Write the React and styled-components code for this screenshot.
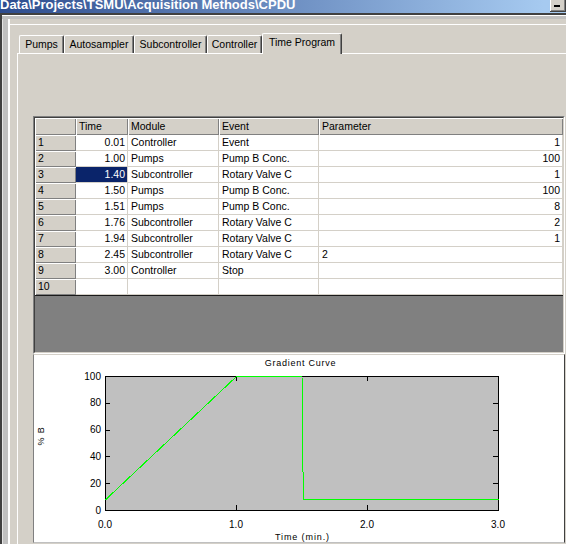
import React from 'react';
import styled, { createGlobalStyle } from 'styled-components';

const UI_FONT = `"Liberation Sans", Arial, sans-serif`;

const GlobalStyle = createGlobalStyle`
  html, body {
    margin: 0;
    padding: 0;
  }
  body {
    width: 566px;
    height: 544px;
    overflow: hidden;
    background: #d4d0c8;
    font-family: ${UI_FONT};
    font-size: 10.5px;
    color: #000;
  }
`;

const StyledWindow = styled.div`
  display: flex;
  flex-direction: column;
  width: 566px;
  height: 544px;
  overflow: hidden;
`;

const StyledTitleBar = styled.div`
  display: flex;
  justify-content: space-between;
  align-items: flex-start;
  height: 13px;
  background: linear-gradient(to right, #2d4c8e 0%, #a6caf0 96%);
`;

const StyledTitleText = styled.span`
  color: #fff;
  font-weight: bold;
  font-size: 13px;
  line-height: 12px;
  margin-top: -1px;
  white-space: nowrap;
`;

const StyledMinButton = styled.div`
  position: relative;
  width: 16px;
  height: 14px;
  margin-top: -2px;
  background: #d4d0c8;
  box-shadow: inset -1px -1px #404040, inset 1px 1px #fff, inset -2px -2px #808080;
  &::after {
    content: '';
    position: absolute;
    left: 4px;
    bottom: 5px;
    width: 6px;
    height: 2px;
    background: #000;
  }
`;

const StyledFrame = styled.div`
  flex: 1;
  border-top: 2px solid #404040;
  border-left: 2px solid #404040;
  padding: 9px 0 0 8px;
  background:
    linear-gradient(to bottom, #fff 0 1px, #c0c0c0 1px 4px, transparent 4px),
    linear-gradient(to right, #e4e4e4 0 1px, #c0c0c0 1px 6px, #fff 6px 8px, transparent 8px),
    #d4d0c8;
  background-repeat: no-repeat;
`;

const StyledInner = styled.div`
  height: 100%;
  border-top: 1px solid #fff;
  padding: 8px 0 0 7px;
`;

const StyledTabRow = styled.div`
  position: relative;
  z-index: 1;
  display: flex;
  align-items: flex-end;
  height: 20px;
  padding-left: 2px;
`;

const StyledTab = styled.div`
  box-sizing: border-box;
  width: ${(p) => p.$width}px;
  height: ${(p) => (p.$active ? 21 : 18)}px;
  margin-bottom: ${(p) => (p.$active ? -1 : 0)}px;
  border-top: 1px solid #fff;
  border-left: 1px solid #fff;
  border-right: 1px solid #404040;
  border-radius: 2px 2px 0 0;
  box-shadow: inset -1px 0 #808080;
  background: #d4d0c8;
  text-align: center;
  line-height: 17px;
  white-space: nowrap;
`;

const StyledPanel = styled.div`
  width: 600px;
  height: 100%;
  border-top: 1px solid #fff;
  border-left: 1px solid #fff;
  padding: 62px 0 0 15px;
  background: #d4d0c8;
`;

const StyledGrid = styled.div`
  box-sizing: border-box;
  width: 532px;
  border: 1px solid;
  border-color: #808080 #fff #fff #808080;
`;

const StyledGridInner = styled.div`
  height: 234px;
  border: 1px solid;
  border-color: #404040 #d4d0c8 #d4d0c8 #404040;
  background: #808080;
`;

const StyledRows = styled.div`
  border-bottom: 1px solid #1a1a1a;
`;

const StyledRow = styled.div`
  display: grid;
  grid-template-columns: 41px 52px 91px 100px 1fr;
  height: ${(p) => (p.$header ? 17 : 16)}px;
`;

const StyledHeadCell = styled.div`
  box-sizing: border-box;
  padding: ${(p) => (p.$header ? 1 : 0)}px 0 0 3px;
  background: #d4d0c8;
  box-shadow: inset 1px 1px #fff, inset -1px -1px #808080;
  line-height: 15px;
  white-space: nowrap;
`;

const StyledCell = styled.div`
  box-sizing: border-box;
  padding: 0 ${(p) => (p.$align === 'right' ? 2 : 3)}px 0 3px;
  background: ${(p) => (p.$selected ? '#0a246a' : '#fff')};
  color: ${(p) => (p.$selected ? '#fff' : '#000')};
  border-right: 1px solid #d4d0c8;
  border-bottom: 1px solid #d4d0c8;
  text-align: ${(p) => p.$align || 'left'};
  line-height: 15px;
  white-space: nowrap;
  overflow: hidden;
`;

const StyledChartPanel = styled.div`
  box-sizing: border-box;
  width: 532px;
  height: 189px;
  border-top: 1px solid #d4d0c8;
  border-left: 1px solid #808080;
  border-right: 1px solid #404040;
  border-bottom: 1px solid #c0c0c0;
  background: #fff;
  svg {
    display: block;
  }
`;

const tabs = [
  { name: 'Pumps', width: 45 },
  { name: 'Autosampler', width: 70 },
  { name: 'Subcontroller', width: 73 },
  { name: 'Controller', width: 55 },
  { name: 'Time Program', width: 80, active: true },
];

const rows = [
  ['0.01', 'Controller', 'Event', '1'],
  ['1.00', 'Pumps', 'Pump B Conc.', '100'],
  ['1.40', 'Subcontroller', 'Rotary Valve C', '1'],
  ['1.50', 'Pumps', 'Pump B Conc.', '100'],
  ['1.51', 'Pumps', 'Pump B Conc.', '8'],
  ['1.76', 'Subcontroller', 'Rotary Valve C', '2'],
  ['1.94', 'Subcontroller', 'Rotary Valve C', '1'],
  ['2.45', 'Subcontroller', 'Rotary Valve C', '2', 'left'],
  ['3.00', 'Controller', 'Stop', ''],
  ['', '', '', ''],
];

// plot geometry, relative to the chart panel
const PX = 71;
const PY = 21;
const PW = 393;
const PH = 134;
const xOf = (t) => PX + (t / 3) * PW;
const yOf = (v) => PY + PH - (v / 100) * PH;
const curve = [[0, 8], [1, 100], [1.5, 100], [1.51, 8], [3, 8]];

const chartText = { fontFamily: UI_FONT, fill: '#000' };

const GradientChart = () => (
  <svg width="530" height="187" shapeRendering="crispEdges">
    <text x="266.5" y="11" textAnchor="middle" fontSize="9" letterSpacing="0.75" style={chartText}>
      Gradient Curve
    </text>
    <rect x={PX + 0.5} y={PY + 0.5} width={PW} height={PH} fill="#c0c0c0" stroke="#000" />
    {[20, 40, 60, 80].map((v) => (
      <g key={v} stroke="#000">
        <line x1={PX} x2={PX + 5} y1={yOf(v) + 0.5} y2={yOf(v) + 0.5} />
        <line x1={PX + PW - 5} x2={PX + PW} y1={yOf(v) + 0.5} y2={yOf(v) + 0.5} />
      </g>
    ))}
    {[1, 2].map((t) => (
      <g key={t} stroke="#000">
        <line x1={xOf(t) + 0.5} x2={xOf(t) + 0.5} y1={PY} y2={PY + 5} />
        <line x1={xOf(t) + 0.5} x2={xOf(t) + 0.5} y1={PY + PH - 5} y2={PY + PH} />
      </g>
    ))}
    <polyline
      points={curve.map(([t, v]) => `${xOf(t) + 0.5},${yOf(v) + 0.5}`).join(' ')}
      fill="none"
      stroke="#00ff00"
      strokeWidth="1"
    />
    {[0, 20, 40, 60, 80, 100].map((v) => (
      <text key={v} x="67" y={yOf(v) + 3.6} textAnchor="end" fontSize="10" style={chartText}>
        {v}
      </text>
    ))}
    {[0, 1, 2, 3].map((t) => (
      <text key={t} x={xOf(t)} y="172.5" textAnchor="middle" fontSize="10" style={chartText}>
        {`${t}.0`}
      </text>
    ))}
    <text x="268.5" y="184.5" textAnchor="middle" fontSize="9" letterSpacing="0.9" style={chartText}>
      Time (min.)
    </text>
    <text
      x="0"
      y="0"
      transform="translate(10 81) rotate(-90)"
      textAnchor="middle"
      fontSize="9"
      letterSpacing="0.8"
      style={chartText}>
      % B
    </text>
  </svg>
);

const App = () => (
  <>
    <GlobalStyle />
    <StyledWindow>
      <StyledTitleBar>
        <StyledTitleText>Data\Projects\TSMU\Acquisition Methods\CPDU</StyledTitleText>
        <StyledMinButton />
      </StyledTitleBar>
      <StyledFrame>
        <StyledInner>
          <StyledTabRow>
            {tabs.map(({ name, width, active }) => (
              <StyledTab key={name} $width={width} $active={active}>
                {name}
              </StyledTab>
            ))}
          </StyledTabRow>
          <StyledPanel>
            <StyledGrid>
              <StyledGridInner>
                <StyledRows>
                  <StyledRow $header>
                    <StyledHeadCell $header />
                    <StyledHeadCell $header>Time</StyledHeadCell>
                    <StyledHeadCell $header>Module</StyledHeadCell>
                    <StyledHeadCell $header>Event</StyledHeadCell>
                    <StyledHeadCell $header>Parameter</StyledHeadCell>
                  </StyledRow>
                  {rows.map(([time, module, event, param, paramAlign], i) => (
                    <StyledRow key={i}>
                      <StyledHeadCell>{i + 1}</StyledHeadCell>
                      <StyledCell $align="right" $selected={i === 2}>
                        {time}
                      </StyledCell>
                      <StyledCell>{module}</StyledCell>
                      <StyledCell>{event}</StyledCell>
                      <StyledCell $align={paramAlign || 'right'}>{param}</StyledCell>
                    </StyledRow>
                  ))}
                </StyledRows>
              </StyledGridInner>
            </StyledGrid>
            <StyledChartPanel>
              <GradientChart />
            </StyledChartPanel>
          </StyledPanel>
        </StyledInner>
      </StyledFrame>
    </StyledWindow>
  </>
);

export default App;
